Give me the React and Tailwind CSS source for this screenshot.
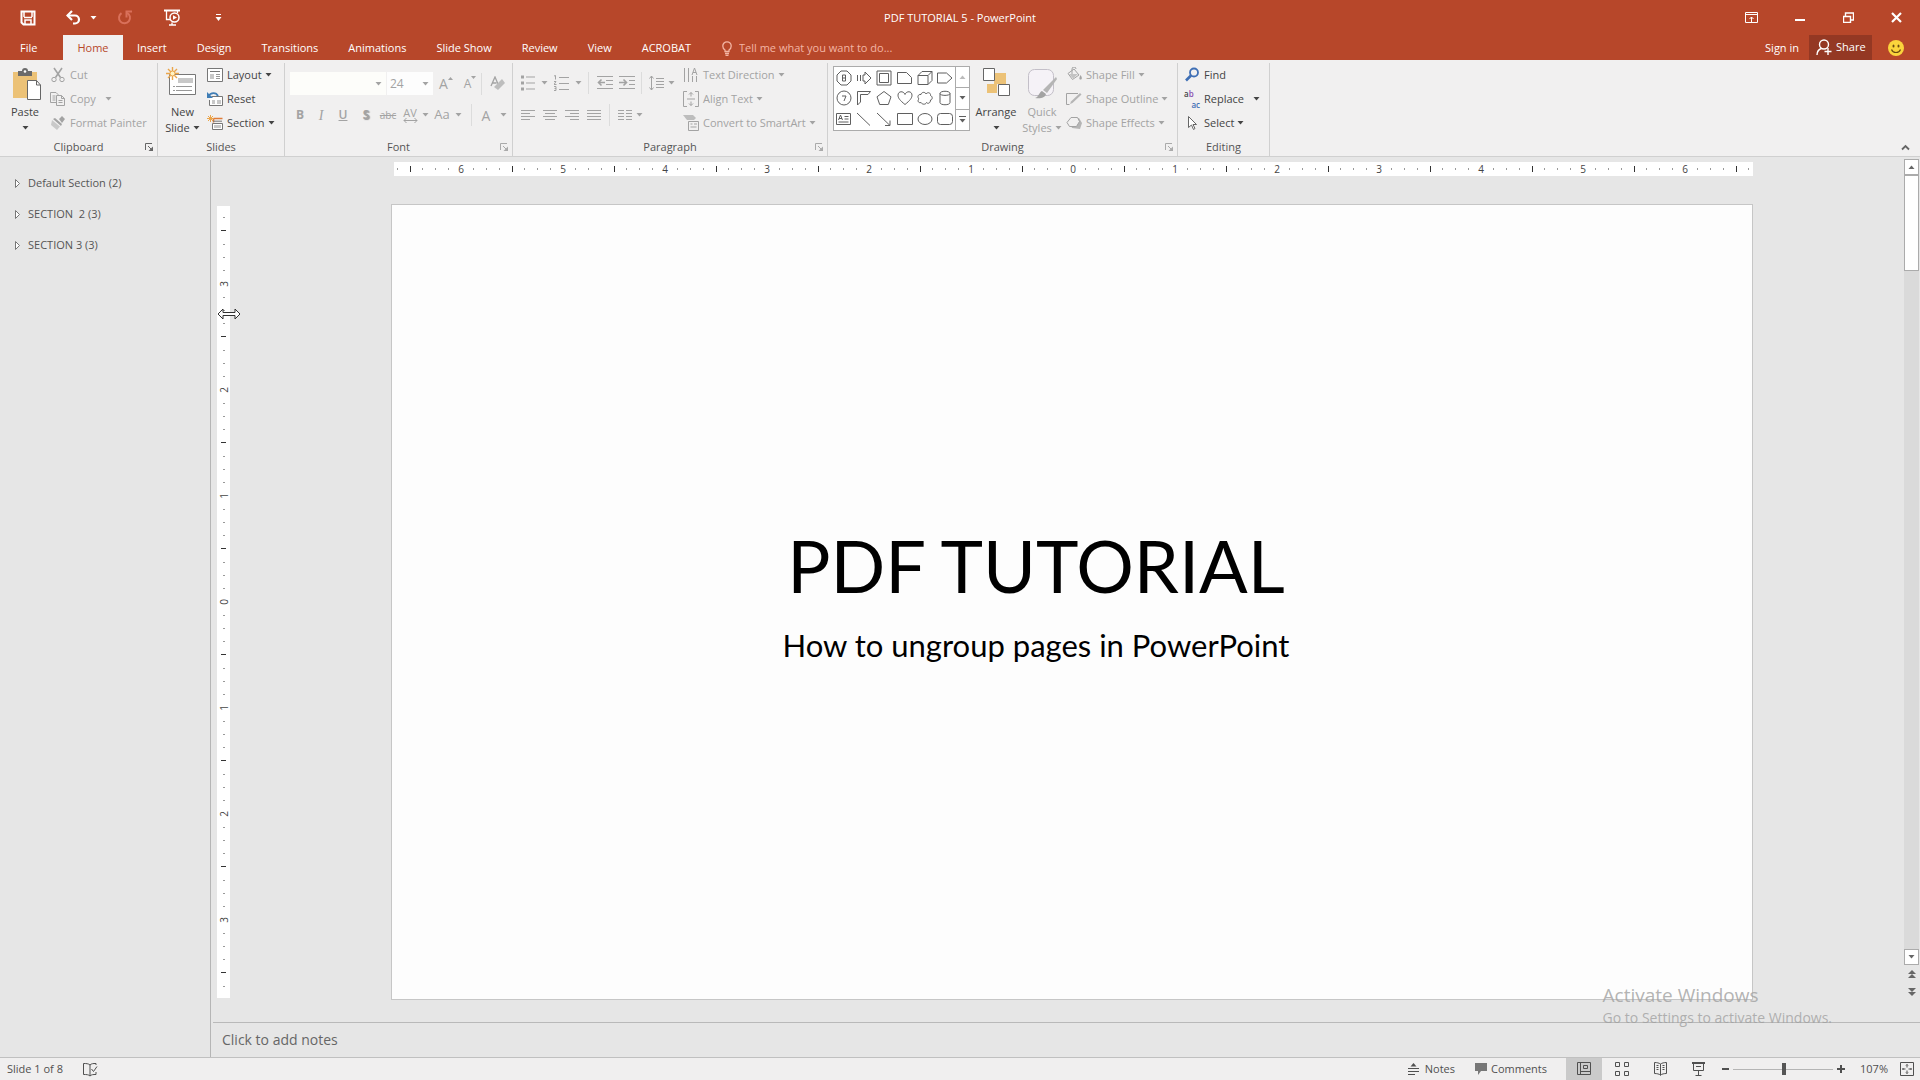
import React from "react";

function Svg({ w = 16, h = 16, className = "", children, label }) {
  return (
    <svg
      width={w}
      height={h}
      viewBox={`0 0 ${w} ${h}`}
      fill="none"
      stroke="currentColor"
      className={`shrink-0 ${className}`}
      aria-hidden={label ? undefined : true}
      aria-label={label}
    >
      {children}
    </svg>
  );
}

function Caret({ className = "" }) {
  return (
    <Svg w={7} h={4} className={className}>
      <path d="M0.5 0h6L3.500 3.500z" fill="currentColor" stroke="none" />
    </Svg>
  );
}

const Launcher = ({ className = "" }) => (
  <Svg w={8} h={8} className={className}>
    <path d="M0.500 7V0.500H7M3 3l3.500 3.500" />
    <path d="M8 3.500V8H3.500z" fill="currentColor" stroke="none" />
  </Svg>
);

/* ---------- title bar ---------- */

function TitleBar() {
  return (
    <header className="grid h-[35px] shrink-0 grid-cols-3 items-center text-white">
      <div className="flex items-center pl-[20px]">
        <button aria-label="Save">
          <Svg w={16} h={16}>
            <path d="M1.500 1.500h13v13h-11l-2-2z" strokeWidth="2" />
            <path d="M4 7.500h8M4 2v5M12 2v5M5 14v-4h6v4" strokeWidth="1.500" />
          </Svg>
        </button>
        <button aria-label="Undo" className="ml-[30px]">
          <Svg w={15} h={15}>
            <path d="M1.500 5.500h7.500a4 4 0 0 1 0 8H7" strokeWidth="2.200" />
            <path d="M6 1L1.500 5.500L6 10" strokeWidth="2.200" />
          </Svg>
        </button>
        <button aria-label="Undo history" className="ml-[9px]">
          <Caret />
        </button>
        <button aria-label="Repeat" className="ml-[20px] text-[#d9705a]">
          <Svg w={15} h={15}>
            <path d="M4.500 3.200a5.500 5.500 0 1 0 5.500-0.300" strokeWidth="2" />
            <path d="M9.500 7.500V1.500H15" strokeWidth="2" />
          </Svg>
        </button>
        <button aria-label="Start from beginning" className="ml-[32px]">
          <Svg w={17} h={17}>
            <path d="M0 1.500h16" strokeWidth="2" />
            <path d="M2.500 2v8.500H6M13.500 2v2M8 13.500v2M5 16h7" strokeWidth="1.300" />
            <circle cx="10.500" cy="8.500" r="4.500" strokeWidth="1.500" />
            <path d="M9 6.200l4 2.300l-4 2.300z" fill="currentColor" stroke="none" />
          </Svg>
        </button>
        <button aria-label="Customize Quick Access Toolbar" className="ml-[34px]">
          <Svg w={7} h={8}>
            <path d="M1 0.500h5" />
            <path d="M0.500 3h6l-3 4z" fill="currentColor" stroke="none" />
          </Svg>
        </button>
      </div>
      <h1 className="pt-[2px] text-center text-[11px]">PDF TUTORIAL 5 - PowerPoint</h1>
      <div className="flex items-center justify-end pr-[18px]">
        <button aria-label="Ribbon display options">
          <Svg w={13} h={11}>
            <path d="M0.500 0.500h12v10H0.500zM0 2.500h13M6.500 10V5M4.500 7l2-2l2 2" />
          </Svg>
        </button>
        <button aria-label="Minimize" className="ml-[37px]">
          <Svg w={10} h={10}>
            <path d="M0 7h10" strokeWidth="2" />
          </Svg>
        </button>
        <button aria-label="Restore" className="ml-[38px]">
          <Svg w={11} h={11}>
            <path d="M0.500 4.500h7v6h-7zM0 4.500h8M2.500 4V1h8v7H8M2 1h9" strokeWidth="1.400" />
          </Svg>
        </button>
        <button aria-label="Close" className="ml-[37px]">
          <Svg w={11} h={11}>
            <path d="M1 1l9 9M10 1l-9 9" strokeWidth="2.200" />
          </Svg>
        </button>
      </div>
    </header>
  );
}

function Tabs() {
  const tabs = ["Insert", "Design", "Transitions", "Animations", "Slide Show", "Review", "View", "ACROBAT"];
  return (
    <nav className="flex h-[25px] shrink-0 items-stretch text-[11px] text-white">
      <button className="w-[63px] pt-[2px] pl-[4px] text-left">
        <span className="pl-[16px]">File</span>
      </button>
      <button className="w-[60px] bg-[#f1f0f0] pt-px text-[#b7472a]">Home</button>
      <div className="flex gap-[30px] pt-px pl-[14px]">
        {tabs.map((t) => (
          <button key={t}>{t}</button>
        ))}
      </div>
      <label className="ml-[31px] flex items-center gap-[7px] pt-px text-[#f3b5a4]">
        <Svg w={10} h={15}>
          <path d="M3 10.500V9C1.500 8 0.800 6.700 0.800 5a4.200 4.200 0 0 1 8.400 0c0 1.700-0.700 3-2.200 4v1.500zM3 12.500h4M3.500 14.500h3" strokeWidth="1.300" />
        </Svg>
        <input
          type="text"
          aria-label="Tell me what you want to do"
          placeholder="Tell me what you want to do..."
          className="w-[190px] bg-transparent outline-none placeholder:text-[#f3b5a4]"
        />
      </label>
      <div className="ml-auto flex items-stretch pr-[16px]">
        <button className="pt-px">Sign in</button>
        <button className="ml-[10px] flex w-[63px] items-center gap-[4px] bg-[#943823] pl-[7px]">
          <Svg w={16} h={17}>
            <circle cx="8" cy="5.500" r="4.500" strokeWidth="1.400" />
            <path d="M1 16c0-3.500 1.500-5.500 4.500-6.500M12 9v7M8.500 12.500h7" strokeWidth="1.400" />
          </Svg>
          Share
        </button>
        <button aria-label="Send a smile" className="ml-[16px]">
          <Svg w={16} h={16}>
            <circle cx="8" cy="8" r="8" fill="#fbd43c" stroke="none" />
            <ellipse cx="5.500" cy="6" rx="1" ry="1.600" fill="#6b4a10" stroke="none" />
            <ellipse cx="10.500" cy="6" rx="1" ry="1.600" fill="#6b4a10" stroke="none" />
            <path d="M3.500 9.500c1.500 4 7.500 4 9 0" stroke="#6b4a10" strokeWidth="1.200" />
          </Svg>
        </button>
      </div>
    </nav>
  );
}

/* ---------- ribbon ---------- */

function Group({ label, launcher, dim, className = "", children }) {
  return (
    <section className={`flex shrink-0 flex-col border-r border-[#d0d0d0] ${className}`} aria-label={label}>
      <div className="flex h-[75px] items-start">{children}</div>
      <div className="relative flex h-[18px] items-center justify-center text-[#555]">
        {label}
        {launcher && (
          <button aria-label={`${label} settings`} className={dim ? "absolute right-[4px] text-[#aaa]" : "absolute right-[4px] text-[#666]"}>
            <Launcher />
          </button>
        )}
      </div>
    </section>
  );
}

function Row({ icon, text, caret, wideCaret, on }) {
  return (
    <button disabled={!on} className={`flex h-[24px] items-center whitespace-nowrap ${on ? "text-[#444]" : "text-[#a3a3a3]"}`}>
      {icon}
      <span className="ml-[4px]">{text}</span>
      {caret && <Caret className={wideCaret ? "ml-[9px]" : "ml-[3px]"} />}
    </button>
  );
}

function Tool({ label, className = "", children }) {
  return (
    <button disabled aria-label={label} className={`flex h-[22px] shrink-0 items-center justify-center ${className}`}>
      {children}
    </button>
  );
}

const Sep = ({ className = "" }) => <span className={`h-[22px] w-px shrink-0 bg-[#dcdcdc] ${className}`} />;

function Clipboard() {
  return (
    <Group label="Clipboard" launcher className="w-[158px]">
      <button className="flex w-[50px] flex-col items-center pt-[5px] text-[#444]">
        <Svg w={30} h={33} className="ml-[4px]">
          <path d="M1 4h24v26H1z" fill="#ecc277" stroke="none" />
          <path d="M6 3h4a3 3 0 0 1 6 0h4v5H6z" fill="#6b6b6b" stroke="none" />
          <circle cx="13" cy="3.500" r="1.300" fill="#fff" stroke="none" />
          <path d="M15.500 12.500h9l4 4.500v14.500h-13z" fill="#fff" stroke="#666" />
          <path d="M24.500 12.500v4.500h4" stroke="#666" />
        </Svg>
        <span className="leading-[22px]">Paste</span>
        <Caret className="mt-[3px]" />
      </button>
      <div className="flex flex-col">
        <Row
          text="Cut"
          icon={
            <Svg>
              <path d="M4 1l6.500 9.500M12 1L5.500 10.500" strokeWidth="1.600" />
              <circle cx="4" cy="12.500" r="2.200" />
              <circle cx="12" cy="12.500" r="2.200" />
            </Svg>
          }
        />
        <Row
          text="Copy"
          caret
          wideCaret
          icon={
            <Svg>
              <path d="M6 11.500H0.500v-10H6l2 2V4M6.500 4.500h5l3 3v7h-8zM11.500 4.500v3h3M2.500 5h3M2.500 7h3M2.500 9h3M8.500 9.500h4M8.500 11.500h4" />
            </Svg>
          }
        />
        <Row
          text="Format Painter"
          icon={
            <Svg>
              <path d="M9 4l3-3l3 3l-3 4zM3 4l2-1l7 6l-1 2z" fill="currentColor" stroke="none" />
              <path d="M2 5l8 6.500L7 15L1 10z" fill="#c9c9c9" stroke="none" />
            </Svg>
          }
        />
      </div>
    </Group>
  );
}

function Slides() {
  return (
    <Group label="Slides" className="w-[127px]">
      <button className="flex w-[49px] flex-col items-center pt-[4px] text-[#444]">
        <Svg w={31} h={31} className="mr-[2px]">
          <path d="M3.500 7.500h26v20h-26z" fill="#fff" stroke="#777" />
          <path d="M12 11h15v5H12z" fill="#c8c8c8" stroke="none" />
          <path d="M7 19.500h19M7 23.500h19" stroke="#999" strokeDasharray="2 1 16 0" />
          <path d="M6.500 0v13M0 6.500h13M2 2l9 9M11 2l-9 9" stroke="#eba54a" strokeWidth="1.400" />
          <circle cx="6.500" cy="6.500" r="2.500" fill="#fff3c4" stroke="#eba54a" />
        </Svg>
        <span className="mt-[6px] leading-[16px]">
          New
          <br />
          <span className="flex items-center gap-[3px]">
            Slide <Caret />
          </span>
        </span>
      </button>
      <div className="flex flex-col">
        <Row
          on
          caret
          text="Layout"
          icon={
            <Svg>
              <path d="M0.500 1.500h15v13h-15z" fill="#fff" stroke="#777" />
              <path d="M3 4.500h10" stroke="#777" />
              <path d="M3 7h4v5H3z" fill="#c8c8c8" stroke="none" />
              <path d="M9 7.500h4M9 9.500h4M9 11.500h4" stroke="#999" />
            </Svg>
          }
        />
        <Row
          on
          text="Reset"
          icon={
            <Svg>
              <path d="M4.500 5.500h11v9h-13V9" fill="#fff" stroke="#777" />
              <path d="M5 9h3v4H5zM10 9h4v4h-4z" fill="#c8c8c8" stroke="none" />
              <path d="M1 5.500c3-4.500 8-4.500 10-0.500" stroke="#3f7db5" strokeWidth="1.800" />
              <path d="M0 1v6h6z" fill="#3f7db5" stroke="none" />
            </Svg>
          }
        />
        <Row
          on
          caret
          text="Section"
          icon={
            <Svg>
              <path d="M6.500 3.500h9M6.500 7.500V3" stroke="#e07b39" strokeWidth="1.600" />
              <path d="M3.500 0v7M0 3.500h7M1 1l5 5M6 1L1 6" stroke="#eba54a" />
              <path d="M5.500 8.500h10v6h-10z" fill="#fff" stroke="#777" />
              <path d="M7 10h7v3H7z" fill="#c8c8c8" stroke="none" />
              <path d="M6 6.200h9" stroke="#777" />
            </Svg>
          }
        />
      </div>
    </Group>
  );
}

function FontGroup() {
  return (
    <Group label="Font" launcher dim className="w-[228px]">
      <div className="flex w-full flex-col gap-[9px] pt-[9px] pl-[5px] text-[#a3a3a3]">
        <div className="flex h-[23px] items-center">
          <span className="relative mr-px flex items-center">
            <select disabled aria-label="Font" className="h-[23px] w-[96px] appearance-none bg-[#fdfdfa] px-[3px]">
              <option></option>
            </select>
            <Caret className="pointer-events-none absolute right-[4px]" />
          </span>
          <span className="relative flex items-center">
            <select disabled aria-label="Font size" defaultValue="24" className="h-[23px] w-[46px] appearance-none bg-[#fdfdfd] px-[3px] text-[12px] opacity-100">
              <option>24</option>
            </select>
            <Caret className="pointer-events-none absolute right-[4px]" />
          </span>
          <Tool label="Increase font size" className="w-[26px] text-[14px]">
            A<Svg w={5} h={4} className="mb-[10px]"><path d="M0 3l2.500-3L5 3z" fill="currentColor" stroke="none" /></Svg>
          </Tool>
          <Tool label="Decrease font size" className="w-[22px] text-[12px]">
            A<Svg w={5} h={4} className="mb-[12px]"><path d="M0 0h5L2.500 3z" fill="currentColor" stroke="none" /></Svg>
          </Tool>
          <Sep />
          <Tool label="Clear formatting" className="ml-[8px]">
            <Svg>
              <path d="M1 10L5 1l3 7M2.500 7h4" strokeWidth="1.300" />
              <path d="M12 3l3 4l-7 7l-4-3z" fill="#bdbdbd" stroke="none" />
            </Svg>
          </Tool>
        </div>
        <div className="flex h-[22px] items-center text-[12px]">
          <Tool label="Bold" className="w-[20px] font-bold">B</Tool>
          <Tool label="Italic" className="w-[22px] font-['Liberation_Serif',serif] text-[14px] italic">I</Tool>
          <Tool label="Underline" className="w-[22px] font-semibold underline">U</Tool>
          <Tool label="Shadow" className="w-[24px] font-bold">
            <span className="[text-shadow:1px_1px_1px_#999]">S</span>
          </Tool>
          <Tool label="Strikethrough" className="w-[20px] text-[10px] line-through">abc</Tool>
          <Tool label="Character spacing" className="w-[24px] flex-col text-[11px] leading-[11px]">
            AV
            <Svg w={15} h={5}>
              <path d="M1 2.500h13M3.500 0L1 2.500L3.500 5M11.500 0L14 2.500L11.500 5" />
            </Svg>
          </Tool>
          <Caret />
          <Tool label="Change case" className="w-[26px] text-[13px]">Aa</Tool>
          <Caret />
          <Sep className="ml-[9px]" />
          <Tool label="Font color" className="w-[28px] text-[14px]">A</Tool>
          <Caret />
        </div>
      </div>
    </Group>
  );
}

const lines = {
  left: "M0 0.500h14M0 3.500h9M0 6.500h14M0 9.500h9",
  center: "M0 0.500h14M2 3.500h10M0 6.500h14M2 9.500h10",
  right: "M0 0.500h14M5 3.500h9M0 6.500h14M5 9.500h9",
  justify: "M0 0.500h14M0 3.500h14M0 6.500h14M0 9.500h14",
};

function Paragraph() {
  return (
    <Group label="Paragraph" launcher dim className="w-[315px]">
      <div className="flex w-[170px] shrink-0 flex-col gap-[10px] pt-[8px] pl-[8px] text-[#a3a3a3]">
        <div className="flex h-[23px] items-center">
          <Tool label="Bullets">
            <Svg w={14} h={16}>
              <path d="M0 2h3M0 8h3M0 14h3" strokeWidth="3" />
              <path d="M5 2h9M5 8h9M5 14h9" />
            </Svg>
          </Tool>
          <Caret className="ml-[6px]" />
          <Tool label="Numbering" className="ml-[6px]">
            <Svg w={16} h={16}>
              <path d="M5 2.500h10M5 8.500h10M5 14.500h10M0 1l1.500-0.500v4M0 6.500h2l-2 3h2.500M0 11.500h2v4H0M0.500 13.500H2" />
            </Svg>
          </Tool>
          <Caret className="ml-[5px]" />
          <Sep className="ml-[6px]" />
          <Tool label="Decrease indent" className="ml-[8px]">
            <Svg w={16} h={14}>
              <path d="M0 0.500h16M9 4.500h7M9 8.500h7M0 12.500h16" />
              <path d="M8 6.500H2M4.500 3.500L1.500 6.500l3 3" strokeWidth="1.600" />
            </Svg>
          </Tool>
          <Tool label="Increase indent" className="ml-[6px]">
            <Svg w={16} h={14}>
              <path d="M0 0.500h16M10 4.500h6M10 8.500h6M0 12.500h16" />
              <path d="M0 6.500h7M4.500 3.500l3 3l-3 3" strokeWidth="1.600" />
            </Svg>
          </Tool>
          <Sep className="ml-[6px]" />
          <Tool label="Line spacing" className="ml-[7px]">
            <Svg w={15} h={16}>
              <path d="M2.500 1v14M0.500 3.500l2-2.500l2 2.500M0.500 12.500l2 2.500l2-2.500M7 3.500h8M7 6.500h8M7 9.500h8M7 12.500h8" />
            </Svg>
          </Tool>
          <Caret className="ml-[4px]" />
        </div>
        <div className="flex h-[22px] items-center">
          {Object.entries(lines).map(([name, d]) => (
            <Tool key={name} label={`Align ${name}`} className="mr-[8px]">
              <Svg w={14} h={10}>
                <path d={d} />
              </Svg>
            </Tool>
          ))}
          <Sep />
          <Tool label="Columns" className="ml-[8px]">
            <Svg w={14} h={10}>
              <path d="M0 0.500h6M8 0.500h6M0 3.500h6M8 3.500h6M0 6.500h6M8 6.500h6M0 9.500h6M8 9.500h6" />
            </Svg>
          </Tool>
          <Caret className="ml-[4px]" />
        </div>
      </div>
      <div className="flex flex-col">
        <Row
          text="Text Direction"
          caret
          icon={
            <Svg>
              <path d="M1.500 1v14M5.500 1v14M9.500 9v6M13.500 9v6M9 8l2.500-7L14 8M10 5.500h3" />
            </Svg>
          }
        />
        <Row
          text="Align Text"
          caret
          icon={
            <Svg>
              <path d="M4 0.500H0.500v15H4M12 0.500h3.500v15H12M4 8h8M8 1.500v4M6 3.500l2-2l2 2M8 14.500v-4M6 12.500l2 2l2-2" />
            </Svg>
          }
        />
        <Row
          text="Convert to SmartArt"
          caret
          icon={
            <Svg>
              <path d="M0 0h10l3 3l-2 2H4z" fill="#bdbdbd" stroke="none" />
              <path d="M5.500 6.500h10v9h-10zM7.500 9h2M11 9h3M7.500 12h6" />
            </Svg>
          }
        />
      </div>
    </Group>
  );
}

const shapes = [
  <><path d="M5 1h6l4 4v6l-4 4H5l-4-4V5z" /><path d="M6.500 5h3v6h-3zM6.500 8h3" /></>,
  <path d="M1.500 5v6M4.500 5v6M7 5v6h2v3l6-6l-6-6v3z" />,
  <><path d="M1 1h14v14H1z" /><path d="M3.500 3.500h9v9h-9z" /></>,
  <path d="M0.500 2.500h9l5 5v6h-14z" />,
  <path d="M1 5.500h10v9H1zM1 5.500l4-4h10v9l-4 4M11 5.500l4-4" />,
  <path d="M0.500 3h9l5.500 5l-5.500 5h-9z" />,
  <><circle cx="8" cy="8" r="7" /><path d="M6 6h4l-2 5" /></>,
  <path d="M1.500 15V1.500h13l-2.500 3H4.500V12z" />,
  <path d="M8 1.500l7 5.300l-2.700 7.700H3.700L1 6.800z" />,
  <path d="M8 14.500C3 10.500 1 8 1 5.200C1 1 6.500 0.500 8 4.500C9.500 0.500 15 1 15 5.200C15 8 13 10.500 8 14.500z" />,
  <path d="M4 12.500C1.500 13.500 0 10.500 2 9C0 7 1 4 4 4.500C4.500 2 8 1.500 9 4C11 1.500 14 3 13.500 5.500C16 6.500 15.500 10 13.500 10C13.500 13.500 10.500 14 9.500 12.500C8.500 15 5 14.500 4 12.500z" />,
  <path d="M3 3.500v9c0 3 10 3 10 0v-9c0-3-10-3-10 0c0 2.500 10 2.500 10 0" />,
  <><path d="M0.500 2.500h14v11H0.500z" /><path d="M2.500 9l2-5l2 5M3 7.500h3M8.500 5.500h4M8.500 8h4M2.500 11h10" /></>,
  <path d="M1 2l13 12.500" />,
  <path d="M1 2l13 12.500M14 9.500v5H9" />,
  <path d="M0.500 2.500h15v11h-15z" />,
  <ellipse cx="8" cy="8" rx="7" ry="5.500" />,
  <rect x="0.500" y="2.500" width="15" height="11" rx="3" />,
];

function Drawing() {
  return (
    <Group label="Drawing" launcher dim className="w-[350px]">
      <div className="mt-[3px] ml-[5px] flex h-[65px] w-[137px] shrink-0 border border-[#ababab] bg-white text-[#5f5f5f]">
        <div className="grid flex-1 grid-cols-6 place-items-center py-px">
          {shapes.map((s, i) => (
            <button key={i} aria-label={`Shape ${i + 1}`}>
              <Svg w={16} h={16}>{s}</Svg>
            </button>
          ))}
        </div>
        <div className="flex w-[14px] flex-col border-l border-[#ababab]">
          <button disabled aria-label="Scroll shapes up" className="flex flex-1 items-center justify-center text-[#bbb]">
            <Caret className="rotate-180" />
          </button>
          <button aria-label="Scroll shapes down" className="flex flex-1 items-center justify-center border-y border-[#ababab]">
            <Caret />
          </button>
          <button aria-label="More shapes" className="flex flex-1 flex-col items-center justify-center gap-[2px]">
            <span className="h-px w-[7px] bg-[#5f5f5f]" />
            <Caret />
          </button>
        </div>
      </div>
      <button className="flex w-[52px] shrink-0 flex-col items-center pt-[5px] text-[#444]">
        <Svg w={28} h={30}>
          <path d="M12 5h12v11H12zM5 16h10v9H5z" fill="#ecc277" stroke="none" />
          <path d="M1.500 0.500h11v12h-11zM16.500 16.500h11v11h-11z" fill="#fff" stroke="#666" />
        </Svg>
        <span className="mt-[3px] leading-[22px]">Arrange</span>
        <Caret className="mt-[3px]" />
      </button>
      <button disabled className="flex w-[40px] shrink-0 flex-col items-center pt-[5px] text-[#a3a3a3]">
        <Svg w={30} h={32}>
          <rect x="1.500" y="1.500" width="25" height="26" rx="6" fill="#f5f2f7" stroke="#c3bfc8" />
          <path d="M29 9l1 2l-10 14l-4-3z" fill="#b5b5b5" stroke="none" />
          <path d="M15 23l4 3c-1 4-6 5-11 4c4-1 4-6 7-7z" fill="#a3a3a3" stroke="none" />
        </Svg>
        <span className="mt-[4px] leading-[16px]">
          Quick
          <br />
          <span className="flex items-center gap-[3px]">
            Styles <Caret />
          </span>
        </span>
      </button>
      <div className="ml-[4px] flex flex-col">
        <Row
          text="Shape Fill"
          caret
          icon={
            <Svg>
              <path d="M2 6.500l6-4.500l5 6l-6.500 4.500zM6 7V2a2 2 0 0 1 4 0" />
              <path d="M14.500 8c2 3 1.500 4.500 0 4.500s-1.500-1.500 0-4.500z" fill="currentColor" stroke="none" />
              <path d="M3 7h9l-5 4.500z" fill="#c3c3c3" stroke="none" />
            </Svg>
          }
        />
        <Row
          text="Shape Outline"
          caret
          icon={
            <Svg>
              <path d="M12 2.500H0.500v11h3" />
              <path d="M14 2l1.500 1.500l-9 8.500l-2.500 1l1-2.500z" fill="#b5b5b5" stroke="none" />
            </Svg>
          }
        />
        <Row
          text="Shape Effects"
          caret
          icon={
            <Svg>
              <path d="M3 5l3 8l8 1l2-6l-3-5z" fill="#b5b5b5" stroke="none" />
              <path d="M5 2.500h6.500l2 4l-3 5H3.500l-2.500-4z" fill="#f1f0f0" />
            </Svg>
          }
        />
      </div>
    </Group>
  );
}

function Editing() {
  return (
    <Group label="Editing" className="w-[92px]">
      <div className="flex flex-col pl-[6px]">
        <Row
          on
          text="Find"
          icon={
            <Svg>
              <circle cx="10" cy="5.500" r="4" stroke="#3f6fb5" strokeWidth="1.800" />
              <path d="M7 8.500L2 13.500" stroke="#3f6fb5" strokeWidth="2.600" />
            </Svg>
          }
        />
        <Row
          on
          caret
          wideCaret
          text="Replace"
          icon={
            <span className="flex w-[16px] shrink-0 flex-col text-left text-[8px] leading-[11px] font-semibold">
              <span>
                a<b className="font-semibold text-[#8a4fb0]">b</b>
              </span>
              <span className="text-right text-[#3f6fb5]">ac</span>
            </span>
          }
        />
        <Row
          on
          caret
          text="Select"
          icon={
            <Svg>
              <path d="M4.500 1.500v11l3-2.500l2 4.500l1.500-1l-2-4h3.500z" fill="#fff" stroke="#666" />
            </Svg>
          }
        />
      </div>
    </Group>
  );
}

/* ---------- rulers ---------- */

function Ruler({ reach, vertical }) {
  const ticks = Array.from({ length: reach * 2 + 1 }, (_, i) => Math.abs(i - reach));
  return (
    <div
      className={
        vertical
          ? "flex w-[13px] flex-1 flex-col overflow-hidden bg-white py-[5px]"
          : "ml-[3px] h-[14px] overflow-hidden bg-white"
      }
    >
      <div className={vertical ? "flex flex-1 flex-col" : "-mx-[3px] flex h-full"}>
        {ticks.map((n, i) => (
          <span key={i} className="flex min-h-0 min-w-0 flex-1 items-center justify-center text-[10px] leading-[12px] text-[#444]">
            {n % 8 === 0 ? (
              <span className={vertical ? "-rotate-90" : ""}>{n / 8}</span>
            ) : n % 4 === 0 ? (
              <span className={vertical ? "h-px w-[5px] bg-[#333]" : "h-[6px] w-px bg-[#333]"} />
            ) : (
              <span className={vertical ? "h-px w-[2px] bg-[#999]" : "h-[2px] w-px bg-[#999]"} />
            )}
          </span>
        ))}
      </div>
    </div>
  );
}

function ScrollBar() {
  const btn = "flex h-[16px] w-[15px] shrink-0 items-center justify-center border border-[#ababab] bg-white";
  return (
    <div className="flex w-[16px] shrink-0 flex-col pt-[2px] pb-[21px] text-[#666]">
      <button aria-label="Scroll up" className={btn}>
        <Caret className="rotate-180" />
      </button>
      <div className="flex w-[15px] flex-1 flex-col bg-[#dadada]">
        <div className="h-[96px] border border-[#ababab] bg-white" />
      </div>
      <button aria-label="Scroll down" className={btn}>
        <Caret />
      </button>
      <button aria-label="Previous slide" className="flex h-[18px] w-[15px] items-center justify-center">
        <Svg w={8} h={9}>
          <path d="M4 0l4 4H0zM4 4l4 4H0z" fill="currentColor" stroke="none" />
        </Svg>
      </button>
      <button aria-label="Next slide" className="flex h-[18px] w-[15px] items-center justify-center">
        <Svg w={8} h={9}>
          <path d="M0 0h8L4 4zM0 4h8L4 8z" fill="currentColor" stroke="none" />
        </Svg>
      </button>
    </div>
  );
}

function StatusBar() {
  return (
    <footer className="flex h-[23px] shrink-0 items-center border-t border-[#c0c0c0] bg-[#f0efef] pr-[6px] pl-[7px] text-[11px] text-[#505050]">
      <span className="w-[76px]">Slide 1 of 8</span>
      <button aria-label="Spelling">
        <Svg w={15} h={15}>
          <path d="M7 13.500V3C5.500 1.500 3 1.500 0.500 1.500v11c3 0 5 0 6.500 1.500C8.500 12.500 10 12.500 13 12.500V10M7 3c1.500-1.500 3-1.500 6-1.500V3M8.500 7l2 2.500L14 4.500" />
        </Svg>
      </button>
      <button className="ml-auto flex items-center gap-[5px]">
        <Svg w={12} h={14}>
          <path d="M0 6.500h11M0 9.500h11M0 12.500h7" />
          <path d="M5.500 1l3 3.500h-6z" fill="currentColor" stroke="none" />
        </Svg>
        Notes
      </button>
      <button className="ml-[20px] flex items-center gap-[4px]">
        <Svg w={12} h={12}>
          <path d="M0 0h12v8H6l-3 4V8H0z" fill="#777" stroke="none" />
        </Svg>
        Comments
      </button>
      <button aria-label="Normal view" className="ml-[19px] flex h-[22px] w-[36px] items-center justify-center bg-[#cacaca]">
        <Svg w={14} h={14}>
          <path d="M0.500 0.500h13v12h-13zM3.500 0.500v12M3.500 9.500h10M6.500 3.500h4v3h-4z" />
        </Svg>
      </button>
      <button aria-label="Slide sorter" className="flex w-[40px] justify-center">
        <Svg w={14} h={14}>
          <path d="M0.500 0.500h4v4h-4zM9.500 0.500h4v4h-4zM0.500 9.500h4v4h-4zM9.500 9.500h4v4h-4z" />
        </Svg>
      </button>
      <button aria-label="Reading view" className="flex w-[36px] justify-center">
        <Svg w={13} h={14}>
          <path d="M6.500 13.500V2C5 1 3 0.500 0.500 0.500v11c2.500 0 4.500 0.500 6 1.500c1.500-1 3.500-1.500 6-1.500v-11C10 0.500 8 1 6.500 2M2.500 3.500h2M2.500 5.500h2M2.500 7.500h2M8.500 3.500h2M8.500 5.500h2M8.500 7.500h2" />
        </Svg>
      </button>
      <button aria-label="Slide show" className="flex w-[40px] justify-center">
        <Svg w={13} h={14}>
          <path d="M0 1h13" strokeWidth="2" />
          <path d="M1.500 2v6.500h10V2M6.500 9v4M3.500 13.500h6M4 4.500h5" />
        </Svg>
      </button>
      <button aria-label="Zoom out" className="ml-[4px]">
        <Svg w={7} h={8}>
          <path d="M0 4h7" strokeWidth="2" />
        </Svg>
      </button>
      <input
        type="range"
        min="10"
        max="200"
        defaultValue="107"
        aria-label="Zoom"
        className="mx-[4px] h-[16px] w-[100px] appearance-none bg-transparent [&::-webkit-slider-runnable-track]:h-px [&::-webkit-slider-runnable-track]:bg-[#b5b5b5] [&::-webkit-slider-thumb]:-mt-[6px] [&::-webkit-slider-thumb]:h-[12px] [&::-webkit-slider-thumb]:w-[4px] [&::-webkit-slider-thumb]:appearance-none [&::-webkit-slider-thumb]:bg-[#555]"
      />
      <button aria-label="Zoom in">
        <Svg w={8} h={8}>
          <path d="M0 4h8M4 0v8" strokeWidth="2" />
        </Svg>
      </button>
      <button className="ml-[13px] w-[32px]">107%</button>
      <button aria-label="Fit slide to window" className="ml-[10px]">
        <Svg w={14} h={14}>
          <path d="M0.500 0.500h13v13h-13zM7 2.500v3M7 8.500v3M2.500 7h3M8.500 7h3M6 3.500l1-1l1 1M6 10.500l1 1l1-1M3.500 6l-1 1l1 1M10.500 6l1 1l-1 1" />
        </Svg>
      </button>
    </footer>
  );
}

export default function App() {
  return (
    <div className="relative flex h-screen flex-col overflow-hidden bg-[#b7472a] font-['Open_Sans','Noto_Sans',sans-serif]">
      <TitleBar />
      <Tabs />
      <div className="flex h-[97px] shrink-0 border-b border-[#d0d0d0] bg-[#f1f0f0] pt-[3px] text-[11px]">
        <Clipboard />
        <Slides />
        <FontGroup />
        <Paragraph />
        <Drawing />
        <Editing />
        <button aria-label="Collapse the ribbon" className="mt-auto mr-[10px] mb-[5px] ml-auto text-[#666]">
          <Svg w={9} h={7}>
            <path d="M1 5.500L4.500 2L8 5.500" strokeWidth="1.800" />
          </Svg>
        </button>
      </div>

      <main className="flex min-h-0 flex-1 bg-[#e6e6e6]">
        <aside className="mt-[3px] w-[211px] shrink-0 border-r border-[#b5b5b5] pt-[8px] text-[11px] text-[#555]">
          {["Default Section (2)", "SECTION  2 (3)", "SECTION 3 (3)"].map((s) => (
            <button key={s} className="flex h-[31px] items-center gap-[8px] pl-[15px] whitespace-pre">
              <Svg w={5} h={9}>
                <path d="M0.500 0.500l4 4l-4 4z" fill="#fff" stroke="#777" />
              </Svg>
              {s}
            </button>
          ))}
        </aside>

        <div className="flex min-w-0 flex-1 flex-col">
          <div className="flex min-h-0 flex-1">
            <div className="flex flex-col pt-[49px] pb-[24px] pl-[6px]">
              <Ruler vertical reach={29} />
            </div>
            <div className="mr-[151px] ml-[161px] flex min-w-0 flex-1 flex-col pt-[5px] pb-[22px]">
              <Ruler reach={53} />
              <article className="mt-[28px] flex flex-1 flex-col items-center justify-center border border-[#c6c6c6] bg-[#fdfdfd] pr-[72px] pb-[18px] font-['Lato','Open_Sans',sans-serif] text-black">
                <h2 className="text-[72px] leading-[104px]">PDF TUTORIAL</h2>
                <p className="text-[31px] leading-[56px]">How to ungroup pages in PowerPoint</p>
              </article>
            </div>
            <ScrollBar />
          </div>
          <div className="ml-[2px] flex h-[35px] shrink-0 border-t border-[#b9b9b9]">
            <input
              type="text"
              aria-label="Notes"
              placeholder="Click to add notes"
              className="h-[33px] w-full bg-transparent pl-[9px] text-[14px] outline-none placeholder:text-[#666]"
            />
          </div>
        </div>
      </main>
      <StatusBar />

      <div className="pointer-events-none absolute right-[88px] bottom-[52px] text-[#a0a0a0]/80">
        <p className="text-[19px] leading-[26px]">Activate Windows</p>
        <p className="text-[14px] leading-[20px]">Go to Settings to activate Windows.</p>
      </div>
      <Svg w={24} h={12} className="pointer-events-none absolute top-[308px] left-[217px]">
        <path d="M6 1L1 6l5 5V7.500h12V11l5-5l-5-5v3.500H6z" fill="#fff" stroke="#333" />
      </Svg>
    </div>
  );
}
